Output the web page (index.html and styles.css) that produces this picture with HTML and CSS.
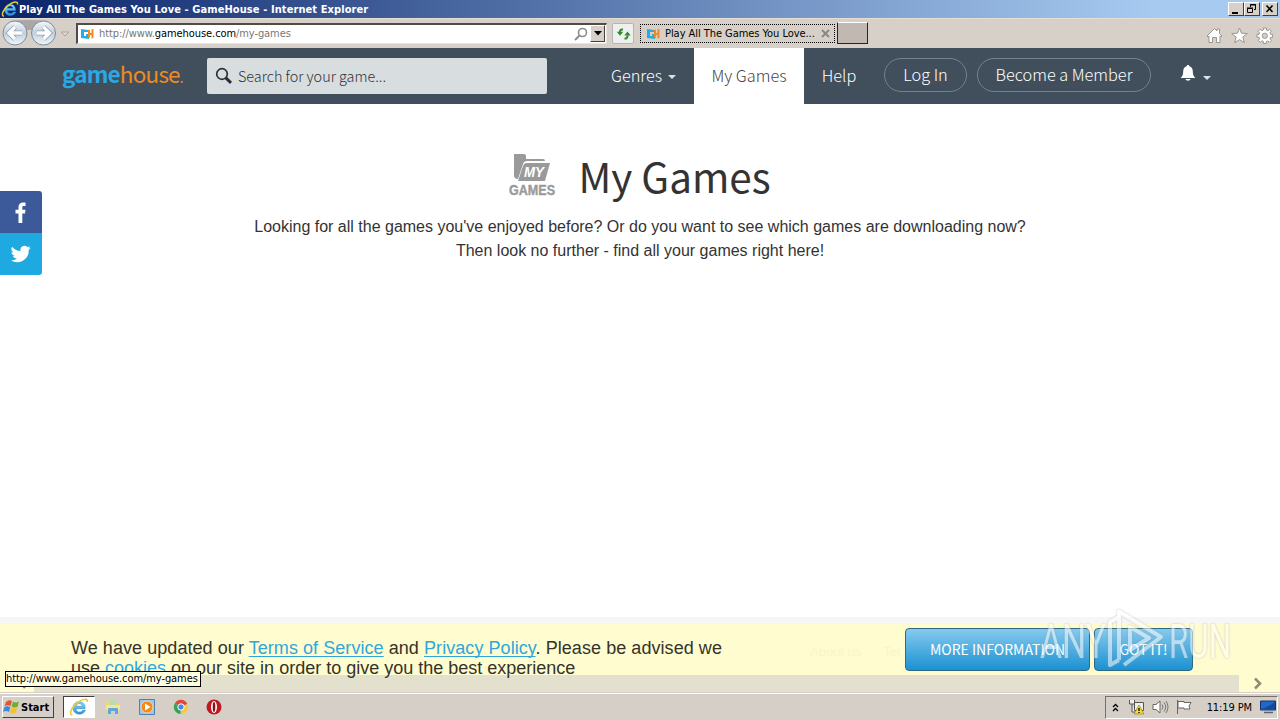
FILE: index.html
```html
<!DOCTYPE html>
<html lang="en">
<head>
  <meta charset="UTF-8">
  <title>Play All The Games You Love - GameHouse</title>
  <link rel="stylesheet" href="styles.css">
</head>
<body>

<svg class="sprites" width="0" height="0">
  <defs>
    <linearGradient id="blueE" x1="0" y1="0" x2="0" y2="1">
      <stop offset="0" stop-color="#8fe0ff"/><stop offset="1" stop-color="#2b8fdc"/>
    </linearGradient>
    <linearGradient id="round" x1="0" y1="0" x2="0" y2="1">
      <stop offset="0" stop-color="#f4f7fa"/><stop offset=".5" stop-color="#c3cfdb"/><stop offset="1" stop-color="#eef8fd"/>
    </linearGradient>
    <symbol id="ie" viewBox="0 0 18 18">
      <path d="M14.5 10.5H6.2c.2 3.6 5 4 6.100 1.400h2.500C12.600 17.300 3.600 16.600 3.600 9.700c0-7.100 11.500-7.700 10.900.8zM6.300 8.300h5.700c-.3-3.200-5.200-3.200-5.700 0z" fill="url(#blueE)" stroke="#2b88cc" stroke-width=".5"/>
      <path d="M3 16.300C-1 15.500 3 8 9 4.200c4-2.700 8-3.300 7.500.3" fill="none" stroke="#f0c830" stroke-width="1.500"/>
    </symbol>
    <symbol id="gh" viewBox="0 0 14 12">
      <path d="M1 1l7 1v2H4v4h2V6h3v5l-8-1z" fill="#22aee0"/>
      <path d="M8 2l2-.5V5l1.500-.3V1.200L13.500 1v9l-2 .5V7L10 7.300V10l-2-1z" fill="#f28a1c"/>
    </symbol>
  </defs>
</svg>

<div class="window">
  <div class="titlebar">
    <svg class="ie" width="18" height="18"><use href="#ie"/></svg>
    <span class="title">Play All The Games You Love - GameHouse - Internet Explorer</span>
    <div class="winbtns">
      <span class="winbtn"><svg width="14" height="12"><path d="M3 9h6v2H3z"/></svg></span>
      <span class="winbtn"><svg width="14" height="12"><path d="M5.500 4V1.500h5v5H9M5 2h6M2.500 5.500h5v4h-5zM2 5h6" fill="none" stroke="#000"/></svg></span>
      <span class="winbtn close"><svg width="14" height="12"><path d="M3.500 2.500l6 6.500M9.500 2.500l-6 6.500" stroke="#000" stroke-width="1.600"/></svg></span>
    </div>
  </div>

  <div class="toolbar">
    <svg class="navbtns" width="56" height="30">
      <path d="M10 2Q29 0 47 2L44 11H14z" fill="#aaa7a5"/>
      <circle cx="15" cy="14" r="12" fill="url(#round)" stroke="#7b8b9e"/>
      <circle cx="43.500" cy="14" r="12" fill="url(#round)" stroke="#7b8b9e"/>
      <path d="M15 8l-6 6 6 6M9 14h13M43.500 8l6 6-6 6M49.500 14h-13" fill="none" stroke="#8fa0b2" stroke-width="5"/>
      <path d="M15 8l-6 6 6 6M9 14h13M43.500 8l6 6-6 6M49.500 14h-13" fill="none" stroke="#fff" stroke-width="3.400"/>
    </svg>
    <svg class="history" width="10" height="6"><path d="M1 1h8L5 5z" fill="#dedad5" stroke="#aaa69f"/></svg>
    <div class="address">
      <svg width="14" height="12"><use href="#gh"/></svg>
      <span class="url">http://www.<b>gamehouse.com</b>/my-games</span>
      <svg width="16" height="16"><circle cx="9.500" cy="6.500" r="4" fill="none" stroke="#8c8c8c" stroke-width="1.600"/><path d="M6.500 9.500L2 14" stroke="#8c8c8c" stroke-width="2"/></svg>
      <span class="drop"><svg width="8" height="5"><path d="M0 0h8L4 4.500z"/></svg></span>
    </div>
    <span class="refresh"><svg width="15" height="14"><path d="M7 2.500Q4 2 4 5M8.500 11.500Q11.500 12 11.500 8.500" fill="none" stroke="#2f8c2c" stroke-width="2"/><path d="M.8 4.800h6.400L4 8.800zM8.300 8.500h6.400L11.500 4.500z" fill="#2f8c2c"/></svg></span>
    <div class="tab">
      <svg width="14" height="12"><use href="#gh"/></svg>
      <span>Play All The Games You Love...</span>
      <svg class="tabclose" width="9" height="9"><path d="M1 1l7 7M8 1L1 8" stroke="#8b8680" stroke-width="1.800"/></svg>
    </div>
    <span class="newtab"></span>
    <div class="tools">
      <svg width="17" height="17"><path d="M1 9l7.500-7.500L11 4V2h2.500v4.500L16 9l-1 1-1-.8v6.300h-3.500v-5h-4v5H3V9.200L2 10z" fill="#fff" stroke="#99958f"/></svg>
      <svg width="17" height="17"><path d="M8.500 1l2 5.200 5.800.3-4.500 3.600 1.500 5.600-4.800-3.100-4.800 3.100 1.500-5.600L.7 6.500l5.800-.3z" fill="#fff" stroke="#99958f"/></svg>
      <svg width="18" height="17"><g stroke="#99958f"><path d="M7.300 1h3v2l1.600.6 1.500-1.400 2 2L14 5.800l.6 1.500h2v3h-2l-.6 1.500 1.400 1.500-2 2-1.500-1.400-1.600.6v2h-3v-2l-1.500-.6-1.500 1.400-2-2 1.400-1.500-.6-1.500H1v-3h2l.6-1.500-1.400-1.500 2-2 1.500 1.400L7.300 3z" fill="#fff"/><circle cx="8.800" cy="8.800" r="2.600" fill="#d6d0c8"/></g></svg>
    </div>
  </div>

  <div class="page">
    <header class="nav">
      <div class="logo"><span>game</span>house<i>.</i></div>
      <div class="search">
        <svg width="18" height="18"><circle cx="7" cy="7" r="5.300" fill="none" stroke="#2b2f33" stroke-width="1.700"/><path d="M10.800 10.800l5.200 5" stroke="#2b2f33" stroke-width="3"/></svg>
        <span>Search for your game...</span>
      </div>
      <nav>
        <a class="genres">Genres <i class="caret"></i></a>
        <a class="active">My Games</a>
        <a class="help">Help</a>
      </nav>
      <a class="pill login">Log In</a>
      <a class="pill member">Become a Member</a>
      <svg class="bell" width="16" height="18"><path d="M8 1c1 0 1.300.6 1.300 1.300 2.700.7 3.500 2.700 3.500 5.200 0 3.500.8 4.500 2.600 6.500H.6c1.800-2 2.600-3 2.600-6.500 0-2.500.8-4.500 3.500-5.200C6.700 1.600 7 1 8 1zM5.500 15h5c-.5 2.200-4.500 2.200-5 0z" fill="#fff"/></svg>
      <i class="caret"></i>
    </header>

    <main>
      <div class="heading">
        <svg width="48" height="44">
          <path d="M5 1h10q2 0 2 2v3h17q2 0 2 2H18q-3 0-4 3L9 26q-4 0-4-4z" fill="#9a9a9a"/>
          <path d="M18 10h23l-5 18H9l5-15q1-3 4-3z" fill="#9a9a9a"/>
          <text class="my" x="15" y="24" textLength="20" lengthAdjust="spacingAndGlyphs">MY</text>
          <text class="games" x="0" y="41.500" textLength="46" lengthAdjust="spacingAndGlyphs">GAMES</text>
        </svg>
        <h1>My Games</h1>
      </div>
      <p>Looking for all the games you've enjoyed before? Or do you want to see which games are downloading now?<br>Then look no further - find all your games right here!</p>
    </main>

    <div class="social">
      <span class="fb"><svg width="12" height="21"><path d="M3.500 21v-9.500H.5V7.800h3V5.200C3.500 2 5.300.5 8 .5h2.500v3.600H8.800c-1.200 0-1.500.5-1.500 1.500v2.200h3.200l-.5 3.700H7.300V21z" fill="#fff"/></svg></span>
      <span class="tw"><svg width="20" height="18" viewBox="0 0 24 20"><path d="M23.600 2.600c-.9.400-1.800.6-2.800.8 1-.6 1.800-1.600 2.100-2.700-.9.600-2 1-3.100 1.200a4.900 4.900 0 0 0-8.400 4.500C7.300 6.200 3.700 4.200 1.300 1.200a4.900 4.900 0 0 0 1.500 6.600c-.8 0-1.600-.2-2.200-.6 0 2.400 1.700 4.400 3.900 4.900-.7.200-1.500.2-2.200.1.600 2 2.400 3.400 4.600 3.400A9.900 9.900 0 0 1-.4 17.600 14 14 0 0 0 21.200 5.100c1-.7 1.800-1.500 2.400-2.500z" fill="#fff"/></svg></span>
    </div>

    <footer>
      <div class="notice">
        <div class="notice-text"><span class="line">We have updated our <a>Terms of Service</a> and <a>Privacy Policy</a>. Please be advised we</span><br>use <a>cookies</a> on our site in order to give you the best experience</div>
        <div class="faded"><span>About us</span><span>Ter</span></div>
        <div class="buttons">
          <button class="more">MORE INFORMATION</button>
          <button class="got">GOT IT!</button>
        </div>
      </div>
      <div class="scrollbar">
        <svg width="34" height="17"><path d="M25 4l-4 4.500 4 4.500" fill="none" stroke="#8f8a73" stroke-width="2.500"/></svg>
        <span class="thumb"></span>
        <svg width="41" height="17"><path d="M16 3.500l5 5-5 5" fill="none" stroke="#8f8a73" stroke-width="2.500"/></svg>
      </div>
    </footer>
    <div class="status">http://www.gamehouse.com/my-games</div>
    <svg class="watermark" width="200" height="68">
      <text x="3" y="51" textLength="66" lengthAdjust="spacingAndGlyphs">ANY</text>
      <text x="132" y="51" textLength="62" lengthAdjust="spacingAndGlyphs">RUN</text>
      <path d="M82 53V4.500L124 30 87 58M82 53l-9 5V15l9-5M93 20l19 11-19 12z"/>
    </svg>
  </div>

  <div class="taskbar">
    <div class="start">
      <svg width="17" height="16"><path d="M3 3q3-3 6-1L7.500 7Q5 5.500 1.700 7z" fill="#e5562c"/><path d="M10 2.500q3 2 6 0L14.500 8Q11 9 8.500 7.500z" fill="#72ad32"/><path d="M1.500 8q3-1.500 5.800 0L6 13q-3-2-6 0z" fill="#3e8ad8"/><path d="M8.200 8.500q3 1.700 6 0L13 13.500q-3 2-6 0z" fill="#f3c12b"/></svg>
      <span>Start</span>
    </div>
    <div class="task"><svg width="20" height="20"><use href="#ie"/></svg></div>
    <svg class="app" width="16" height="16"><path d="M1 2h5l1 2h7v9H1z" fill="#edd57a"/><path d="M4 1h7v5H4z" fill="#b7deac"/><path d="M1 6h14v5H1z" fill="#f5e59c"/><path d="M3 15v-5q0-1 1-1h8q1 0 1 1v5h-3v-3H6v3z" fill="#5ca9de"/></svg>
    <svg class="app" width="16" height="16"><path d="M.5.500h15v15H.5z" fill="#9cc8ee" stroke="#4c82b8"/><circle cx="8" cy="8" r="6" fill="#f18b1c" stroke="#fbd59e"/><path d="M6 4.500l5.500 3.500L6 11.500z" fill="#fff"/></svg>
    <svg class="app" width="16" height="16"><path d="M8 8L1.800 4.400A7 7 0 0 1 14.300 5z" fill="#df4937"/><path d="M8 8l6.300-3A7 7 0 0 1 7.500 15z" fill="#f6ca3c"/><path d="M8 8l-.5 7A7 7 0 0 1 1.800 4.400z" fill="#37a159"/><circle cx="8" cy="8" r="3.200" fill="#4688e8" stroke="#fff"/></svg>
    <svg class="app" width="16" height="16"><circle cx="8" cy="8" r="7.500" fill="#be1820"/><ellipse cx="8" cy="8" rx="3" ry="6" fill="#fff"/><ellipse cx="8" cy="8" rx="1.300" ry="5" fill="#8b1015"/></svg>
    <div class="tray">
      <svg width="7" height="9"><path d="M1 4l2.500-2.500L6 4M1 8l2.500-2.500L6 8" fill="none" stroke="#000" stroke-width="1.300"/></svg>
      <svg class="net" width="17" height="16"><path d="M1.500 1v4h5V1M4 5v8h3M6.500 3.500h9v8h-9z" fill="#eee" stroke="#555"/><path d="M11 6l5 9H6z" fill="#f8d92c" stroke="#8c7700" stroke-width=".6"/><path d="M11 9v3M11 13v1" stroke="#000" stroke-width="1.300"/></svg>
      <svg class="vol" width="17" height="16"><path d="M1 5.500h3L8 2v12l-4-3.500H1z" fill="#fff" stroke="#666"/><path d="M10 5.500q2 2.500 0 5M12 3.500q3.500 4.500 0 9M14 2q4 6 0 12" fill="none" stroke="#777"/></svg>
      <svg class="flag" width="17" height="16"><path d="M1.500 1v14M2 2.500h6v1h7l-2 3.500 1 3H8V9H2z" fill="#fff" stroke="#666"/></svg>
      <span class="clock">11:19 PM</span>
      <svg width="16" height="14"><path d="M.5 1h15v9H.5z" fill="#2467c5" stroke="#16346c"/><path d="M1 9Q7 8 15 2v7z" fill="#154b9c"/><path d="M4 12.500h9" stroke="#567" stroke-width="1.500"/></svg>
    </div>
  </div>
</div>

</body>
</html>
```
FILE: styles.css
```css
body {
  margin: 0;
  font-family: "DejaVu Sans Condensed", "DejaVu Sans", sans-serif;
  font-size: 11px;
  color: #000;
}
* {
  box-sizing: border-box;
}
svg {
  display: block;
  flex-shrink: 0;
}
.sprites {
  position: absolute;
}
.window {
  width: 1280px;
  height: 720px;
  display: flex;
  flex-direction: column;
  overflow: hidden;
}

/* browser chrome */
.titlebar {
  height: 18px;
  display: flex;
  align-items: center;
  padding: 0 2px 0 1px;
  background: linear-gradient(to right, #0a246a, #a6caf0 90%);
  white-space: nowrap;
}
.title {
  color: #fff;
  font-weight: bold;
  font-size: 11px;
  letter-spacing: 0.09px;
}
.winbtns {
  display: flex;
  margin-left: auto;
}
.winbtn {
  width: 16px;
  height: 14px;
  background: #d6d0c8;
  border: 1px solid;
  border-color: #fff #404040 #404040 #fff;
}
.close {
  margin-left: 2px;
}
.toolbar {
  height: 30px;
  display: flex;
  align-items: center;
  background: #d6d0c8;
  border-top: 1px solid #e6ded4;
  white-space: nowrap;
}
.history {
  margin: 0 0 0 4px;
}
.address {
  width: 531px;
  height: 21px;
  margin: 0 0 1px 6px;
  padding: 0 1px 0 2px;
  display: flex;
  align-items: center;
  background: #fff;
  border: 1px solid #e8e4df;
  border-top: 2px solid #504b4b;
  border-left: 2px solid #504b4b;
}
.url {
  flex: 1;
  margin-left: 5px;
  color: #777;
  letter-spacing: -0.08px;
}
.url b {
  font-weight: normal;
  color: #000;
}
.drop {
  width: 15px;
  height: 17px;
  margin-left: 1px;
  display: flex;
  align-items: center;
  justify-content: center;
  background: #d6d0c8;
  border: 1px solid;
  border-color: #fff #404040 #404040 #fff;
}
.refresh {
  width: 22px;
  height: 21px;
  margin: 0 6px 0 5px;
  display: flex;
  align-items: center;
  justify-content: center;
  background: #eef0ee;
  border: 1px solid #b5b5b5;
  border-radius: 2px;
}
.tab {
  width: 195px;
  height: 19px;
  display: flex;
  align-items: center;
  padding: 0 4px 0 5px;
  border: 1px dotted #000;
}
.tab span {
  margin-left: 5px;
  letter-spacing: -0.05px;
}
.tabclose {
  margin-left: auto;
}
.newtab {
  width: 31px;
  height: 22px;
  margin: 0 0 1px 2px;
  background: #c0b8b1;
  border: 1px solid;
  border-color: #fff #252525 #252525 #252525;
}
.tools {
  display: flex;
  gap: 8px;
  margin: 3px 6px 0 auto;
}

/* site */
.page {
  position: relative;
  flex: 1;
  display: flex;
  flex-direction: column;
  background: #fff;
}
.nav {
  height: 56px;
  display: flex;
  align-items: center;
  background: #414f5d;
  color: #fff;
  font-family: "Noto Sans CJK SC", sans-serif;
  font-weight: 300;
  font-size: 16.300px;
  white-space: nowrap;
}
.logo {
  width: 145px;
  margin-left: 62px;
  padding-bottom: 6px;
  font-size: 22.500px;
  font-weight: 400;
  letter-spacing: -0.800px;
  color: #ef8b22;
}
.logo span {
  color: #2ba9e6;
  font-weight: 700;
}
.logo i {
  font-style: normal;
  font-size: 14px;
}
.search {
  width: 340px;
  height: 36px;
  display: flex;
  align-items: center;
  padding: 0 0 1px 8px;
  border-radius: 2px;
  background: #d8dde0;
  color: #333;
  font-size: 14.400px;
}
.search span {
  margin-left: 5px;
}
nav {
  display: flex;
  height: 56px;
  margin-left: 46px;
}
nav a {
  display: flex;
  align-items: center;
  justify-content: center;
  padding-bottom: 2px;
}
.genres {
  width: 101px;
}
.active {
  width: 110px;
  background: #fff;
  color: #444;
}
.help {
  width: 70px;
}
.caret {
  border: 4px solid transparent;
  border-top: 4px solid #dde3e8;
  border-bottom: 0;
  margin: 3px 0 0 6px;
}
.pill {
  height: 34px;
  line-height: 31px;
  margin: 0 0 2px 10px;
  border: 1px solid #75818b;
  border-radius: 17px;
  text-align: center;
}
.login {
  width: 83px;
}
.member {
  width: 174px;
}
.bell {
  margin: 0 1px 6px 29px;
}
main {
  flex: 1;
  text-align: center;
  color: #333;
}
.heading {
  display: flex;
  align-items: center;
  justify-content: center;
  height: 60px;
  margin-top: 43px;
  gap: 21px;
}
.heading svg {
  margin-bottom: 4px;
}
.my, .games {
  font-family: "Liberation Sans", sans-serif;
  font-weight: bold;
}
.my {
  font-size: 14px;
  font-style: italic;
  fill: #fff;
}
.games {
  font-size: 15px;
  fill: #9a9a9a;
  stroke: #9a9a9a;
  stroke-width: 0.4px;
}
h1 {
  margin: 0 0 4px;
  font-family: "Noto Sans CJK SC", sans-serif;
  font-weight: 400;
  font-size: 40.400px;
}
main p {
  margin: 8px 0 0;
  font-family: "Liberation Sans", Arial, sans-serif;
  font-size: 16px;
  line-height: 24px;
}
.social {
  position: absolute;
  left: 0;
  top: 143px;
  width: 42px;
}
.social span {
  height: 42px;
  display: flex;
  align-items: center;
  justify-content: center;
}
.fb {
  background: #3c5a99;
  border-radius: 0 3px 0 0;
}
.tw {
  background: #1fa9e1;
  border-radius: 0 0 3px 0;
}

/* cookie notice */
footer {
  height: 75px;
  border-top: 7px solid #f6f6f6;
  background: #fffcd0;
}
.notice {
  position: relative;
  z-index: 1;
  height: 51px;
  display: flex;
  padding-left: 71px;
  font-family: "Liberation Sans", Arial, sans-serif;
  font-size: 18px;
  line-height: 20px;
  color: #34332a;
  white-space: nowrap;
}
.notice-text {
  width: 739px;
  padding-top: 14px;
}
.line {
  letter-spacing: 0.06px;
}
.notice a {
  color: #30a7db;
  text-decoration: underline;
  text-decoration-thickness: 1px;
  text-underline-offset: 2px;
  text-decoration-skip-ink: none;
}
.faded {
  width: 95px;
  overflow: hidden;
  display: flex;
  gap: 22px;
  padding-top: 18px;
  font-size: 13px;
  color: #f7f6cc;
}
.buttons {
  display: flex;
  gap: 4px;
  padding-top: 4px;
}
button {
  height: 43px;
  padding: 0 0 1px;
  border: 1px solid #2c6a85;
  border-radius: 4px;
  background: linear-gradient(#85caee, #1b91d2);
  color: #fff;
  font-family: "Noto Sans CJK SC", sans-serif;
  font-size: 14px;
}
.more {
  width: 185px;
}
.got {
  width: 99px;
}
.scrollbar {
  display: flex;
  height: 17px;
}
.thumb {
  flex: 1;
  background: #e4e0ce;
}
.status {
  position: absolute;
  z-index: 2;
  left: 5px;
  top: 623px;
  width: 196px;
  height: 16px;
  line-height: 14px;
  letter-spacing: -0.08px;
  border: 1px solid #000;
  background: #ffffe1;
  white-space: nowrap;
}
.watermark {
  position: absolute;
  z-index: 2;
  left: 1037px;
  top: 559px;
  opacity: 0.55;
  filter: drop-shadow(0 0 1px #999);
}
.watermark text {
  font-family: Roboto, sans-serif;
  font-size: 49px;
  font-weight: 400;
  fill: #fff;
}
.watermark path {
  fill: none;
  stroke: #fff;
  stroke-width: 4px;
  stroke-linejoin: round;
}

/* taskbar */
.taskbar {
  height: 28px;
  display: flex;
  align-items: center;
  padding: 1px 2px 0;
  background: #d6cfc8;
  border-top: 1px solid #d6cfc8;
  box-shadow: inset 0 1px #fff;
}
.start {
  width: 52px;
  height: 22px;
  display: flex;
  align-items: center;
  gap: 1px;
  border: 1px solid;
  border-color: #fff #404040 #404040 #fff;
  font-weight: bold;
  font-size: 11px;
}
.task {
  width: 32px;
  height: 22px;
  margin: 0 10px 0 9px;
  display: flex;
  align-items: center;
  justify-content: center;
  background: #fff;
  border: 1px solid;
  border-color: #404040 #fff #fff #404040;
}
.app {
  margin-right: 18px;
}
.app + .app {
  margin-right: 17.500px;
}
.tray {
  width: 173px;
  height: 23px;
  margin-left: auto;
  padding: 0 1px 0 6px;
  display: flex;
  align-items: center;
  border: 1px solid;
  border-color: #77716b #fff #fff #77716b;
}
.net {
  margin-left: 9px;
}
.vol, .flag {
  margin-left: 7px;
}
.clock {
  margin: 0 8px 0 auto;
  letter-spacing: -0.1px;
}
```
